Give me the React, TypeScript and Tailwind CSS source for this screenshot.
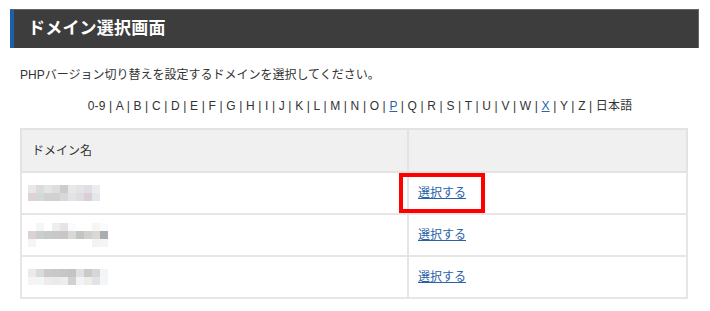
import React from 'react';

const letters = ['0-9', 'A', 'B', 'C', 'D', 'E', 'F', 'G', 'H', 'I', 'J', 'K', 'L', 'M', 'N', 'O', 'P', 'Q', 'R', 'S', 'T', 'U', 'V', 'W', 'X', 'Y', 'Z', '日本語'];
const linked = ['P', 'X'];

// pixelated (mosaic) domain names
const blurRows: string[][][] = [
    [
        ['#ede6e8', '#d8dcdb', '#e3e5e4', '#dcdedd', '#cdcccb', '#e8e8ec', '#e6e3e6', '#e1dee3', '#ebecef'],
        ['#dcd3d8', '#d3d9d6', '#cfd1d3', '#cfd1d3', '#d9d8d6', '#e2e3e6', '#e0dde1', '#d9cfd8', '#e4e7eb'],
    ],
    [
        ['#ffffff', '#f4f5f5', '#ffffff', '#eeeeef', '#e6e4e6', '#fafbfc', '#ffffff', '#ffffff', '#f7f6f4', '#fafbfc'],
        ['#dcd2d5', '#c9cfcb', '#c8cac9', '#c6c9c8', '#cbc6c4', '#d8d8d8', '#c3c3c2', '#cfd1d1', '#dbd8d3', '#a9adb2'],
        ['#f7f4f6', '#ffffff', '#ffffff', '#ffffff', '#ffffff', '#ffffff', '#ffffff', '#ffffff', '#f4f3f3', '#f5f5f5'],
    ],
    [
        ['#efe8e8', '#d8dbdd', '#cacac9', '#c7c9c9', '#c6c6c4', '#c5c2c8', '#dfe1e1', '#cbcac7', '#d5d6d7', '#f4f5f7'],
        ['#f6f3f3', '#f4f5f5', '#ececec', '#eaeaeb', '#ecedec', '#d1d0d2', '#f3f3f4', '#efedec', '#e2e3e5', '#f4f5f7'],
    ],
];

const Mosaic: React.FC<{ rows: string[][] }> = ({ rows }) => (
    <div className="flex flex-col">
        {rows.map((row, i) => (
            <div key={i} className="flex">
                {row.map((c, j) => (
                    <div key={j} className="w-[8px] h-[8px]" style={{ backgroundColor: c }} />
                ))}
            </div>
        ))}
    </div>
);

export default function App() {
    return (
        <div className="w-[710px] h-[311px] bg-white pt-[9px] pl-[10px] text-[#333] font-['Liberation_Sans','Noto_Sans_CJK_JP',sans-serif]">
            {/* Title bar */}
            <div className="w-[689px] h-[39px] bg-[#3d3d3d] border-t border-r border-[#666] border-l-[4px] border-l-[#1d5fa8] flex items-center pl-[14px]">
                <h1 className="text-white font-bold text-[17px] tracking-[0.2px]">ドメイン選択画面</h1>
            </div>

            <p className="mt-[18px] ml-[10px] text-[12px] leading-[18px]">
                PHPバージョン切り替えを設定するドメインを選択してください。
            </p>

            {/* Index */}
            <div className="mt-[13px] w-[700px] flex justify-center text-[12px] leading-[18px] tracking-[0.15px]">
                {letters.map((l, i) => (
                    <span key={l} className="whitespace-pre">
                        {linked.includes(l) ? <a href="#" className="text-[#2a62a8] underline">{l}</a> : l}
                        {i < letters.length - 1 ? ' | ' : ''}
                    </span>
                ))}
            </div>

            {/* Domain table */}
            <table className="mt-[13px] ml-[10px] w-[668px] border-collapse text-[12px]">
                <thead>
                    <tr className="h-[43px] bg-[#f0f0f0]">
                        <th className="w-[387px] border-2 border-[#e3e3e3] text-left font-normal pl-[10px]">ドメイン名</th>
                        <th className="border-2 border-[#e3e3e3]"></th>
                    </tr>
                </thead>
                <tbody>
                    {blurRows.map((rows, i) => (
                        <tr key={i} className="h-[42px]">
                            <td className="border-2 border-[#e6e6e6] pl-[6px]">
                                <Mosaic rows={rows} />
                            </td>
                            <td className="border-2 border-[#e6e6e6] pl-[9px]">
                                {i === 0 ? (
                                    <span className="inline-block -ml-[19px] border-[4px] border-[#ff0000] px-[15px] py-[7px] leading-[18px]">
                                        <a href="#" className="text-[#2a62a8] underline">選択する</a>
                                    </span>
                                ) : (
                                    <a href="#" className="text-[#2a62a8] underline">選択する</a>
                                )}
                            </td>
                        </tr>
                    ))}
                </tbody>
            </table>
        </div>
    );
}
